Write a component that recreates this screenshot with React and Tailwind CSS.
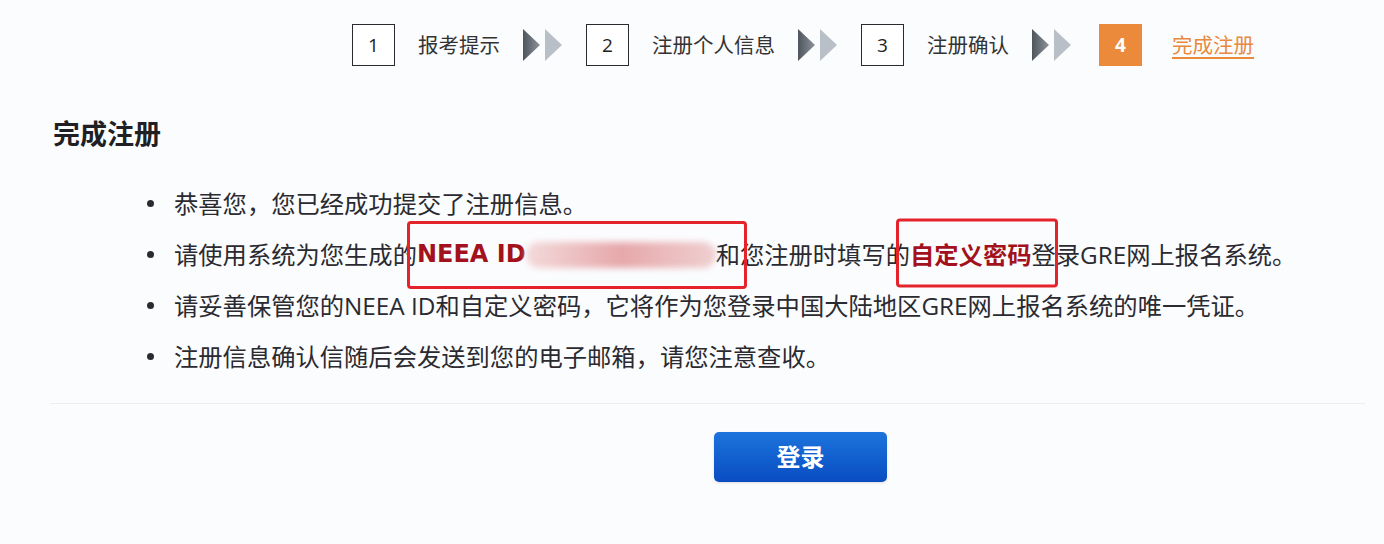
const Arrows = () => (
  <svg width="40" height="34" viewBox="0 0 40 34" className="shrink-0">
    <defs>
      <linearGradient id="darkArrow" x1="0" y1="0" x2="1" y2="0">
        <stop offset="0" stopColor="#4f555d" />
        <stop offset="1" stopColor="#8c939b" />
      </linearGradient>
    </defs>
    <polygon points="0,1 17,17 0,33" fill="url(#darkArrow)" />
    <polygon points="22,1 39,17 22,33" fill="#b9bfc6" />
  </svg>
);

const StepBox = ({ n, active }) => (
  <div
    className={
      active
        ? "w-[43px] h-[42px] flex items-center justify-center bg-[#ea8a3a] text-white text-[19px] font-bold shrink-0"
        : "w-[43px] h-[42px] flex items-center justify-center border border-[#2a2a30] bg-white text-[#222] text-[19px] shrink-0"
    }
  >
    {n}
  </div>
);

const steps = [
  { n: 1, label: "报考提示" },
  { n: 2, label: "注册个人信息" },
  { n: 3, label: "注册确认" },
];

const Dot = () => (
  <span className="w-[7px] h-[7px] rounded-full bg-[#2a2a30] mr-[20px] shrink-0" />
);

export default function App() {
  return (
    <div
      className="w-full h-[544px] bg-[#fbfcfe] text-[#2a2a30] overflow-hidden"
      style={{ fontFamily: '"Open Sans", "Noto Sans CJK SC", sans-serif' }}
    >
      {/* STEPS */}
      <div className="flex items-center pt-[24px] pl-[352px] h-[66px]">
        {steps.map((s) => (
          <div key={s.n} className="flex items-center">
            <StepBox n={s.n} />
            <span className="ml-[23px] mr-[23px] text-[20.5px] text-[#333]">{s.label}</span>
            <Arrows />
            <span className="w-[23px]" />
          </div>
        ))}
        <div className="ml-[4px] flex items-center">
          <StepBox n={4} active />
          <span className="ml-[30px] text-[20.5px] text-[#e8893e] underline underline-offset-4">
            完成注册
          </span>
        </div>
      </div>

      {/* HEADING */}
      <h1 className="mt-[50px] pl-[53px] text-[27px] leading-[36px] font-bold text-[#1f1f24]">
        完成注册
      </h1>

      {/* INFO LIST */}
      <ul className="mt-[26px] pl-[147px] text-[24.3px] leading-[51px] text-[#2a2a30]">
        <li className="flex items-center">
          <Dot />
          恭喜您，您已经成功提交了注册信息。
        </li>
        <li className="flex items-center whitespace-nowrap">
          <Dot />
          请使用系统为您生成的
          <span className="relative inline-flex items-center">
            <b
              className="text-[#a3121c] font-bold text-[24px]"
              style={{ fontFamily: '"DejaVu Sans", sans-serif' }}
            >
              NEEA ID
            </b>
            <span className="w-[190px] h-[26px] rounded-full bg-gradient-to-r from-[#f3dada] via-[#e6a8ab] to-[#efcfd0] blur-[3px]" />
            <span className="absolute left-[-10px] top-1/2 -translate-y-1/2 w-[340px] h-[68px] border-[3px] border-[#e5232b] rounded-[4px]" />
          </span>
          和您注册时填写的
          <span className="relative inline-flex items-center">
            <b className="text-[#a3121c] font-bold">自定义密码</b>
            <span className="absolute left-[-14px] top-1/2 -translate-y-[53%] w-[162px] h-[69px] border-[3px] border-[#e5232b] rounded-[4px]" />
          </span>
          登录GRE网上报名系统。
        </li>
        <li className="flex items-center whitespace-nowrap">
          <Dot />
          请妥善保管您的NEEA ID和自定义密码，它将作为您登录中国大陆地区GRE网上报名系统的唯一凭证。
        </li>
        <li className="flex items-center">
          <Dot />
          注册信息确认信随后会发送到您的电子邮箱，请您注意查收。
        </li>
      </ul>

      {/* DIVIDER */}
      <div className="mt-[21px] ml-[50px] mr-[19px] border-t border-[#eceef3]" />

      {/* LOGIN */}
      <button className="mt-[28px] ml-[714px] w-[173px] h-[50px] rounded-[5px] bg-gradient-to-b from-[#1d74dc] to-[#0a4cc2] text-white text-[24px] font-bold shadow-sm">
        登录
      </button>
    </div>
  );
}
